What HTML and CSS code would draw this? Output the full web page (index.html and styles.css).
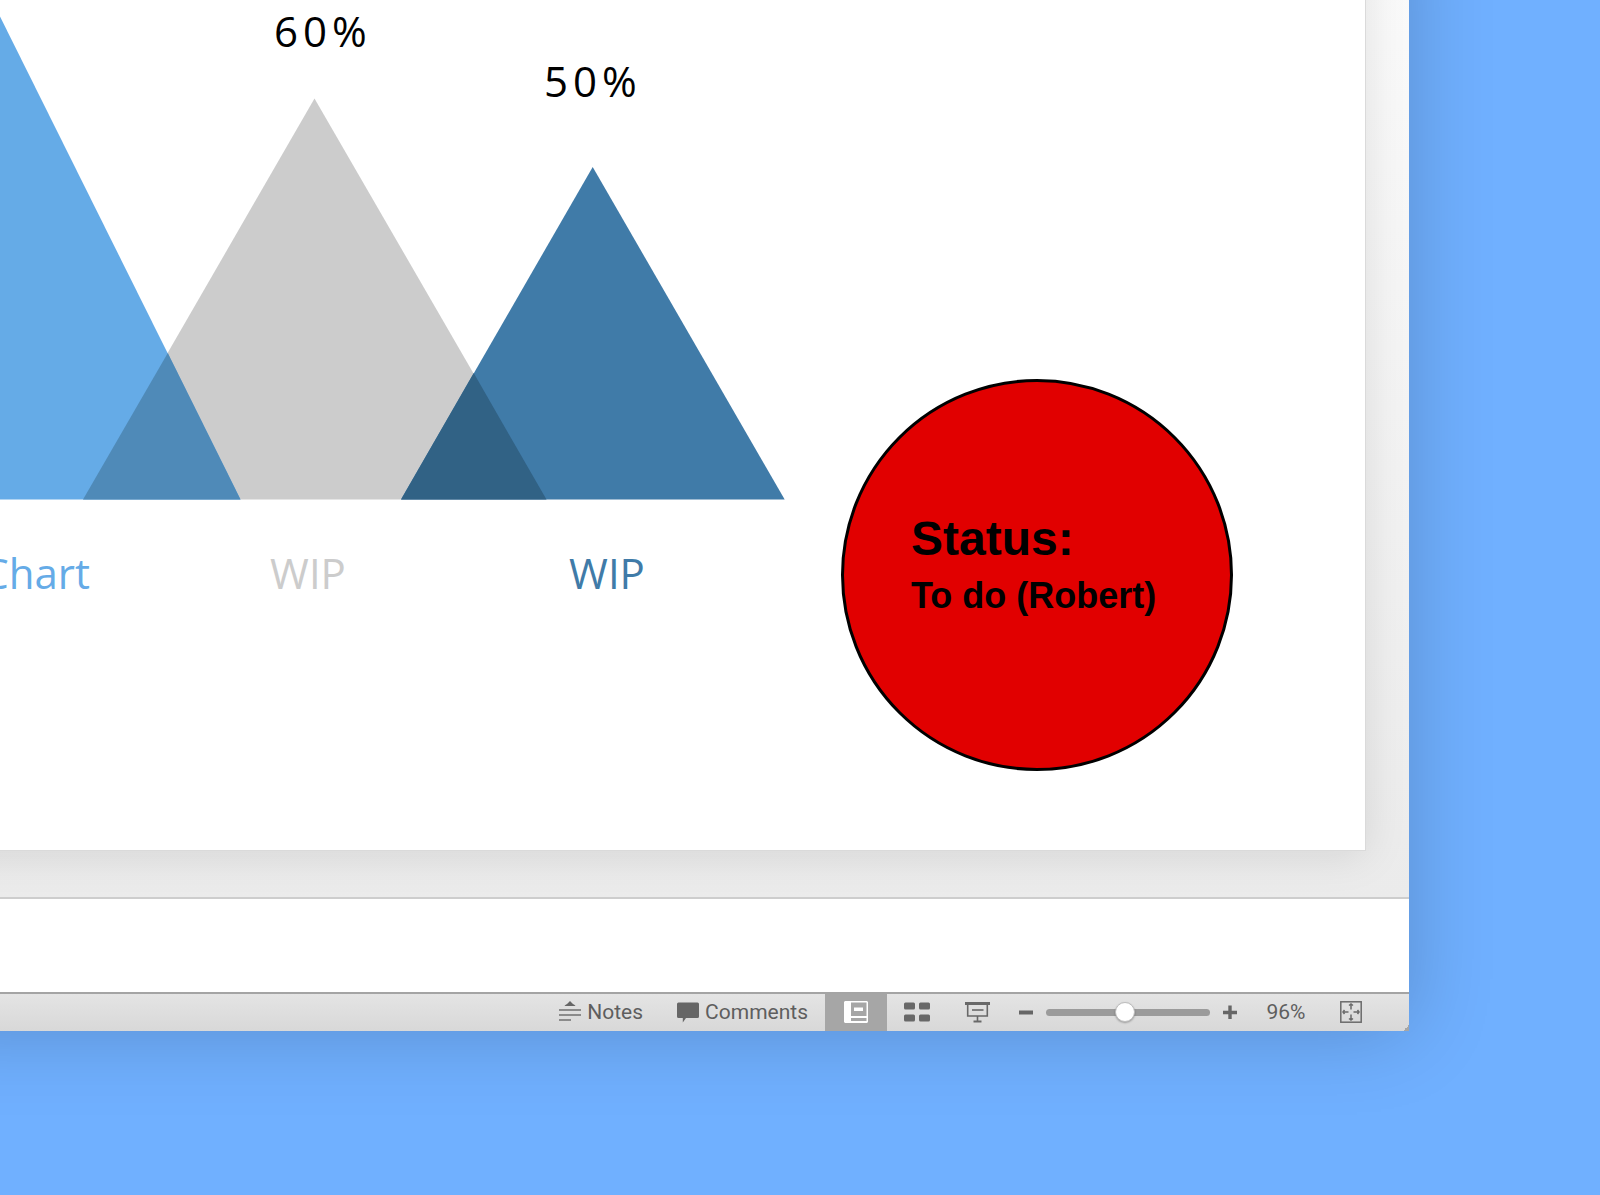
FILE: index.html
```html
<!DOCTYPE html>
<html lang="en">
<head>
<meta charset="utf-8">
<meta name="viewport" content="width=device-width, initial-scale=1">
<title>Presentation</title>
<link rel="stylesheet" href="styles.css">
</head>
<body>
<div class="desktop">
  <main class="window">
    <section class="workspace">
      <article class="slide">
        <figure class="chart">
          <svg class="peaks" viewBox="0 0 786 500" aria-hidden="true">
            <path fill="#cccccc" d="M314.5 98.5 546.5 499.6H83Z"/>
            <path fill="#65abe7" d="M0 16.5 240.5 499.6H0Z"/>
            <path fill="#407ba8" d="M592.7 167 784.7 499.6H401Z"/>
            <path fill="#4f8ab8" d="M167.8 353 240.5 499.6H83Z"/>
            <path fill="#316285" d="M473.7 373 546.5 499.6H401Z"/>
          </svg>
          <span class="percent percent-mid">60%</span>
          <span class="percent percent-low">50%</span>
          <figcaption class="labels">
            <span class="label label-sky">Chart</span>
            <span class="label label-gray">WIP</span>
            <span class="label label-navy">WIP</span>
          </figcaption>
        </figure>
        <aside class="badge">
          <h2 class="badge-title">Status:</h2>
          <p class="badge-text">To do (Robert)</p>
        </aside>
      </article>
    </section>
    <textarea class="notes" aria-label="Speaker notes"></textarea>
    <footer class="statusbar">
      <button class="tool tool-notes" type="button">
        <svg class="icon" width="22" height="22" viewBox="0 0 22 22" aria-hidden="true"><path fill="#666" d="M5.500 5Q6 4 8 3L11 0l3 3q2 1 2.500 2Z"/><path stroke="#707070" stroke-width="1.500" d="M0 9h22M0 14h22M0 19h12"/></svg>
        <span>Notes</span>
      </button>
      <button class="tool tool-comments" type="button">
        <svg class="icon" width="22" height="22" viewBox="0 0 22 22" aria-hidden="true"><path fill="#666" d="M1.500 1.500h19Q22 1.500 22 3v12.500q0 1.500-1.500 1.500H9l-3.200 4.500V17H1.500Q0 17 0 15.500V3Q0 1.500 1.500 1.500Z"/></svg>
        <span>Comments</span>
      </button>
      <button class="view view-active" type="button" aria-label="Normal view">
        <svg class="icon" width="24" height="22" viewBox="0 0 24 22" aria-hidden="true"><path fill="#fff" fill-rule="evenodd" d="M1 0h22l1 1v20l-1 1H1l-1-1V1ZM7 1.500V15h15.500V1.500ZM7 17v3h15.500v-3Z"/><path fill="#fff" d="M10 6.500h9V10h-9Z"/></svg>
      </button>
      <button class="view" type="button" aria-label="Slide sorter">
        <svg class="icon" width="26" height="20" viewBox="0 0 26 20" fill="#686868" aria-hidden="true"><rect y=".5" width="11" height="7" rx="1.500"/><rect x="15" y=".5" width="11" height="7" rx="1.500"/><rect y="12.500" width="11" height="7" rx="1.500"/><rect x="15" y="12.500" width="11" height="7" rx="1.500"/></svg>
      </button>
      <button class="view" type="button" aria-label="Slide show">
        <svg class="icon" width="25" height="22" viewBox="0 0 25 22" fill="none" stroke="#686868" aria-hidden="true"><path stroke-width="3" d="M0 2.500h25"/><path stroke-width="1.600" d="M2.700 3v12h19.600V3M12.500 15v5"/><path stroke-width="1.600" d="M7 9h11.500"/><path stroke-width="2" d="M8.500 20.500h8"/></svg>
      </button>
      <button class="zoom-step" type="button" aria-label="Zoom out">
        <svg class="icon" width="14" height="14" viewBox="0 0 14 14" aria-hidden="true"><path fill="#666" d="M0 5.500h14v4H0Z"/></svg>
      </button>
      <input class="zoom-range" type="range" min="0" max="100" value="48" aria-label="Zoom">
      <button class="zoom-step" type="button" aria-label="Zoom in">
        <svg class="icon" width="14" height="14" viewBox="0 0 14 14" aria-hidden="true"><path stroke="#666" stroke-width="3.400" d="M0 7.500h14M7 .5v14"/></svg>
      </button>
      <button class="zoom-value" type="button">96%</button>
      <button class="fit" type="button" aria-label="Fit slide to window">
        <svg class="icon" width="22" height="22" viewBox="0 0 22 22" fill="none" stroke="#6b6b6b" aria-hidden="true"><rect x=".8" y=".8" width="20.400" height="20.400" stroke-width="1.500"/><path stroke-width="1.500" d="M11 2.500v6M11 13.500v6M2.500 11h6M13.500 11h6M9 4.500 11 3l2 1.500M9 17.500l2 1.500 2-1.500M4.500 9 3 11l1.500 2M17.500 9l1.500 2-1.500 2"/></svg>
      </button>
      <span class="grip"></span>
    </footer>
  </main>
</div>
</body>
</html>
```
FILE: styles.css
```css
* {
  box-sizing: border-box;
}

body {
  margin: 0;
  background: #70b0ff;
  font-family: "Open Sans", "Noto Sans", sans-serif;
}

.desktop {
  display: flex;
  min-height: 100vh;
  padding: 0 191px 164px 0;
  overflow: hidden;
}

/* The window runs past the top and left edges of the desktop */
.window {
  display: flex;
  flex: 1;
  flex-direction: column;
  margin: -80px 0 0 -80px;
  padding: 80px 0 0 80px;
  background: #fff;
  box-shadow: 0 0 80px rgba(0, 0, 0, 0.2);
}

.workspace {
  display: flex;
  flex: 1;
  margin: -80px 0 0 -80px;
  padding: 80px 43px 46px 80px;
  overflow: hidden;
  background: linear-gradient(#fbfbfb, #ebebeb);
}

.slide {
  position: relative;
  flex: 1;
  margin: -80px 0 0 -80px;
  padding: 80px 0 0 80px;
  border: 1px solid #dadada;
  background: #fff;
  box-shadow: 0 4px 40px rgba(0, 0, 0, 0.1);
}

.chart {
  position: relative;
  width: 786px;
  margin: -1px 0 0 -1px;
}

.peaks {
  display: block;
  width: 100%;
}

.percent {
  position: absolute;
  color: #000;
  font-size: 42px;
  line-height: 48px;
  letter-spacing: 5px;
}

.percent-mid {
  top: 7px;
  left: 274px;
}

.percent-low {
  top: 57px;
  left: 544px;
}

.labels {
  display: grid;
  grid-template-columns: 90px 436px 162px;
  padding-top: 49px;
}

.label {
  display: flex;
  justify-content: center;
  font-size: 42px;
  line-height: 48px;
}

.label-sky {
  justify-content: flex-end;
  color: #65abe7;
}

.label-gray {
  color: #ccc;
}

.label-navy {
  color: #407ba8;
}

.badge {
  position: absolute;
  right: 132px;
  bottom: 79px;
  display: flex;
  flex-direction: column;
  justify-content: center;
  width: 392px;
  height: 392px;
  padding: 0 0 18px 67px;
  border: 3px solid #000;
  border-radius: 50%;
  background: #e10000;
  color: #000;
  font-family: "Liberation Sans", Arial, sans-serif;
}

.badge-title,
.badge-text {
  margin: 0;
  font-weight: 700;
}

.badge-title {
  font-size: 48px;
  line-height: 60px;
}

.badge-text {
  font-size: 36px;
  line-height: 54px;
}

.notes {
  display: block;
  width: 100%;
  height: 95px;
  padding: 12px;
  border: 0;
  border-top: 2px solid #cdcdcd;
  outline: 0;
  background: #fff;
  resize: none;
}

.statusbar {
  position: relative;
  display: flex;
  justify-content: flex-end;
  align-items: stretch;
  height: 39px;
  margin-left: -80px;
  padding-right: 47px;
  border-top: 2px solid #a4a4a4;
  background: linear-gradient(#e4e4e4, #d8d8d8);
  color: #5e5e5e;
  font-family: Roboto, "Liberation Sans", sans-serif;
  font-size: 21px;
  line-height: 24px;
}

.statusbar button {
  display: flex;
  align-items: center;
  justify-content: center;
  padding: 0 0 2px;
  border: 0;
  background: none;
  color: inherit;
  font: inherit;
}

.icon {
  display: block;
  flex: none;
}

.statusbar .tool {
  gap: 6px;
}

.statusbar .tool-notes {
  margin-right: 34px;
}

.statusbar .tool-comments {
  margin-right: 17px;
}

.statusbar .view {
  width: 60px;
}

.statusbar .view-active {
  width: 62px;
  background: #a6a6a6;
}

.statusbar .zoom-step {
  width: 14px;
}

.view + .zoom-step {
  margin-left: 12px;
}

.zoom-range {
  width: 164px;
  height: 20px;
  margin: 0 13px;
  align-self: center;
  appearance: none;
  background: none;
}

.zoom-range::-webkit-slider-runnable-track {
  height: 7px;
  border-radius: 4px;
  background: #9b9b9b;
}

.zoom-range::-webkit-slider-thumb {
  width: 20px;
  height: 20px;
  margin-top: -7px;
  border: 1px solid #bdbdbd;
  border-radius: 50%;
  appearance: none;
  background: #fff;
  box-shadow: 0 1px 2px rgba(0, 0, 0, 0.3);
}

.statusbar .zoom-value {
  width: 42px;
  margin: 0 33px 0 28px;
}

.grip {
  position: absolute;
  right: 0;
  bottom: 0;
  width: 6px;
  height: 6px;
  background: linear-gradient(135deg, transparent 50%, #a6a6a6 50%);
}
```
